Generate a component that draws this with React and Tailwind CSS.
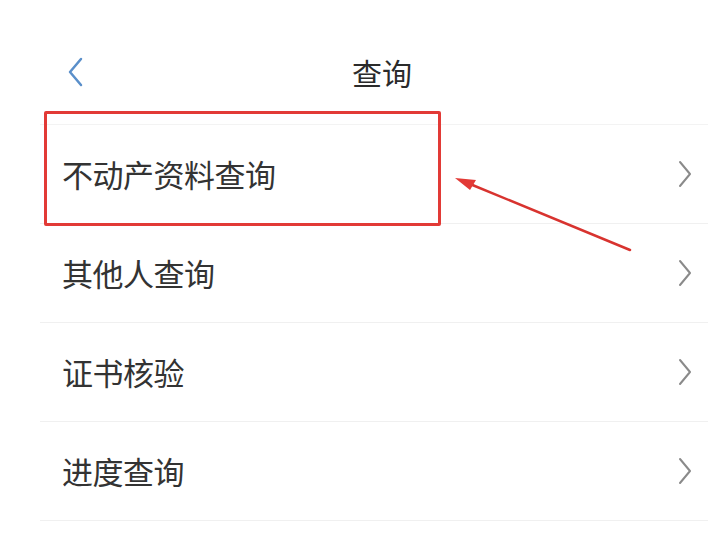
import React from "react";

const items = ["不动产资料查询", "其他人查询", "证书核验", "进度查询"];

const Chevron = () => (
  <svg width="14" height="28" viewBox="0 0 14 28" fill="none">
    <path d="M2 2 L12 14 L2 26" stroke="#8a8a8a" strokeWidth="2" strokeLinecap="round" strokeLinejoin="round" />
  </svg>
);

const App = () => {
  return (
    <div
      className="relative w-[720px] h-[541px] bg-white overflow-hidden text-[#333]"
      style={{ fontFamily: '"Noto Sans CJK SC", "Noto Sans", sans-serif' }}
    >
      {/* Header */}
      <div className="h-[124px] pt-[46px]">
        <div className="relative h-[52px] flex items-center justify-center">
          <button className="absolute left-[66px] top-[10px] p-0">
            <svg width="18" height="32" viewBox="0 0 18 32" fill="none">
              <path d="M15 3 L4 16 L15 29" stroke="#5a8fca" strokeWidth="2.5" strokeLinecap="round" strokeLinejoin="round" />
            </svg>
          </button>
          <h1 className="text-[30px] leading-none font-normal text-[#2b2b2b] ml-[44px]">查询</h1>
        </div>
      </div>

      {/* List */}
      <div className="ml-[40px] mr-[12px] border-t border-[#f3f3f3]">
        {items.map((t) => (
          <div
            key={t}
            className="h-[99px] flex items-center justify-between pl-[22px] pr-[16px] border-b border-[#f0f0f0]"
          >
            <span className="text-[31px] leading-none tracking-[-0.5px] -mt-[2px]">{t}</span>
            <Chevron />
          </div>
        ))}
      </div>

      {/* Annotation */}
      <div className="absolute left-[44px] top-[111px] w-[397px] h-[115px] border-[3px] border-[#e23a36] rounded-[2px]" />
      <svg className="absolute left-0 top-0" width="720" height="541" viewBox="0 0 720 541">
        <path d="M630 250 L470 184" stroke="#d8332f" strokeWidth="2.5" strokeLinecap="round" />
        <path d="M455 178 L476 180 L470 190 Z" fill="#e23a36" />
      </svg>
    </div>
  );
};

export default App;
